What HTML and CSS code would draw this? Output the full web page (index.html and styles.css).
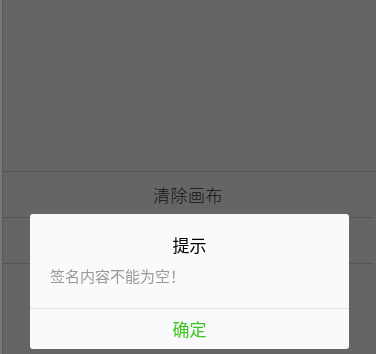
FILE: index.html
```html
<!DOCTYPE html>
<html lang="zh">
<head>
<meta charset="utf-8">
<title>签名</title>
<link rel="stylesheet" href="styles.css">
</head>
<body>
<div class="app">
  <div class="canvas"></div>
  <div class="row">清除画布</div>
  <div class="row"></div>
</div>
<div class="mask"></div>
<div class="dialog">
  <div class="dialog-hd">提示</div>
  <div class="dialog-bd">签名内容不能为空！</div>
  <div class="dialog-ft"><span class="dialog-btn">确定</span></div>
</div>
</body>
</html>
```
FILE: styles.css
```css
html, body {
  margin: 0;
  padding: 0;
  height: 100%;
  overflow: hidden;
}
body {
  background: #eeeeee;
  font-family: "Noto Sans CJK SC", "Noto Sans", sans-serif;
}
.app {
  margin-left: 2px;
  border-left: 1px solid #b4b4b4;
  background: #cbcbcb;
  height: 100%;
}
.canvas {
  height: 171px;
  border-bottom: 1px solid #aaaaaa;
}
.row {
  height: 45px;
  border-bottom: 1px solid #aaaaaa;
  margin-right: 3px;
  display: flex;
  align-items: center;
  justify-content: center;
  font-size: 17px;
  font-weight: 300;
  color: #2a2a2a;
  letter-spacing: 0.5px;
}
.mask {
  position: fixed;
  inset: 0;
  background: rgba(0, 0, 0, 0.5);
}
.dialog {
  position: fixed;
  left: 30px;
  top: 214px;
  width: 319px;
  background: #fafafc;
  border-radius: 3px;
  overflow: hidden;
}
.dialog-hd {
  padding: 19px 0 8px;
  text-align: center;
  font-size: 17px;
  line-height: 24px;
  color: #000000;
}
.dialog-bd {
  padding: 0 20px;
  font-size: 15px;
  line-height: 22px;
  color: #999999;
}
.dialog-ft {
  margin-top: 21px;
  border-top: 1px solid #e0e0e2;
  line-height: 40px;
  text-align: center;
  font-size: 17px;
}
.dialog-btn {
  color: #3cc51f;
}
```
